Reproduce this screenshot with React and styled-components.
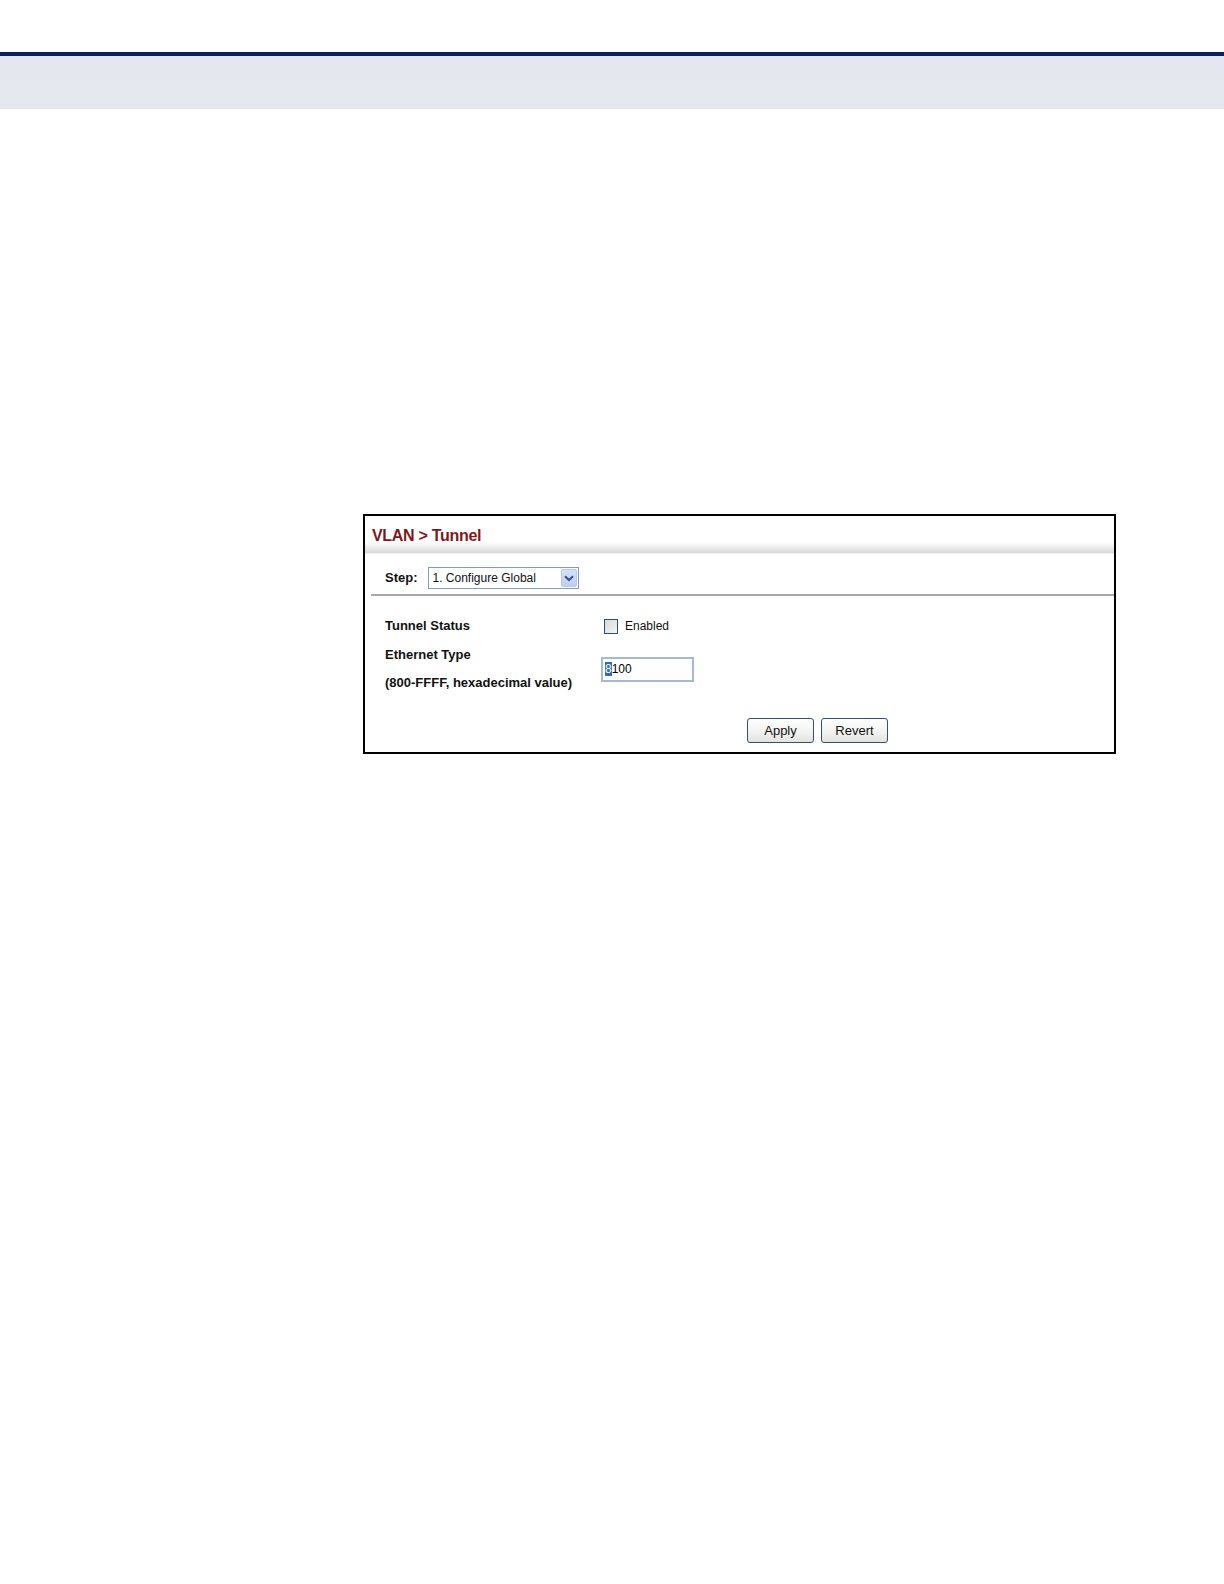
import React from 'react';
import styled, {createGlobalStyle} from "styled-components";

const GlobalStyle = createGlobalStyle`
  body {
    margin: 0;
    background: #ffffff;
    font-family: "Liberation Sans", Arial, sans-serif;
  }
`;

const App = () => {
    return (
        <Page>
            <GlobalStyle/>
            <TopRule/>
            <TopBand/>
            <Main>
                <Panel>
                    <TitleBar>VLAN &gt; Tunnel</TitleBar>
                    <Shade/>
                    <StepRow>
                        <BoldLabel>Step:</BoldLabel>
                        <Select>
                            <span>1. Configure Global</span>
                            <SelectArrow>
                                <svg width="10" height="7" viewBox="0 0 10 7">
                                    <path d="M1 1.2 L5 5 L9 1.2" fill="none" stroke="#35538f" strokeWidth="2"/>
                                </svg>
                            </SelectArrow>
                        </Select>
                    </StepRow>
                    <Divider/>
                    <Form>
                        <FieldRow>
                            <LabelCell>
                                <BoldLabel>Tunnel Status</BoldLabel>
                            </LabelCell>
                            <CheckWrap>
                                <CheckBox/>
                                <CheckText>Enabled</CheckText>
                            </CheckWrap>
                        </FieldRow>
                        <FieldRow $tall>
                            <LabelCell>
                                <BoldLabel $line>Ethernet Type</BoldLabel>
                                <BoldLabel $line>(800-FFFF, hexadecimal value)</BoldLabel>
                            </LabelCell>
                            <TextInput>
                                <Selected>8</Selected>100
                            </TextInput>
                        </FieldRow>
                        <ButtonRow>
                            <Button>Apply</Button>
                            <Button>Revert</Button>
                        </ButtonRow>
                    </Form>
                </Panel>
            </Main>
        </Page>
    )
}

export default App;

const Page = styled.div`
  width: 1224px;
  min-height: 1584px;
  padding-top: 52px;
  box-sizing: border-box;
  background: #fff;
`;
const TopRule = styled.div`
  height: 4px;
  background: #0b2260;
`;
const TopBand = styled.div`
  height: 53px;
  background: linear-gradient(#e4e7ef, #e5e8ee);
`;
const Main = styled.div`
  padding: 405px 0 0 363px;
`;
const Panel = styled.div`
  width: 753px;
  box-sizing: border-box;
  border: 2px solid #000;
  background: #fff;
`;
const TitleBar = styled.div`
  height: 26px;
  box-sizing: border-box;
  padding: 12px 0 0 7px;
  line-height: 16px;
  font-size: 16px;
  font-weight: bold;
  letter-spacing: -0.3px;
  color: #7b1a1c;
`;
const Shade = styled.div`
  height: 11px;
  background: linear-gradient(#ffffff, #e9e9e9 60%, #d9d9d9);
  border-bottom: 1px solid #f2f2f2;
`;
const StepRow = styled.div`
  display: flex;
  align-items: center;
  padding: 13px 0 5px 20px;
  gap: 10px;
`;
const BoldLabel = styled.div`
  font-size: 13px;
  font-weight: bold;
  color: #111;
  line-height: ${p => p.$line ? '28px' : '16px'};
`;
const Select = styled.div`
  width: 151px;
  height: 22px;
  box-sizing: border-box;
  border: 1px solid #7f9db9;
  display: flex;
  align-items: center;
  justify-content: space-between;
  padding: 0 1px 0 4px;
  font-size: 12px;
  color: #111;
`;
const SelectArrow = styled.div`
  width: 16px;
  height: 18px;
  box-sizing: border-box;
  border: 1px solid #b6c8ec;
  border-radius: 2px;
  background: linear-gradient(#d6e1f7, #bccff3);
  display: flex;
  align-items: center;
  justify-content: center;
`;
const Divider = styled.div`
  margin-left: 6px;
  border-top: 2px solid #a9a9a9;
`;
const Form = styled.div`
  padding: 22px 0 9px 20px;
`;
const FieldRow = styled.div`
  display: flex;
  align-items: center;
  margin-bottom: ${p => p.$tall ? '21px' : '7px'};
`;
const LabelCell = styled.div`
  width: 216px;
`;
const CheckWrap = styled.div`
  display: flex;
  align-items: center;
  gap: 7px;
  padding-left: 3px;
`;
const CheckBox = styled.div`
  width: 14px;
  height: 15px;
  box-sizing: border-box;
  border: 1px solid #2a4e78;
  background: linear-gradient(135deg, #d9d9d5, #f4f4f2);
`;
const CheckText = styled.span`
  font-size: 12px;
  color: #111;
`;
const TextInput = styled.div`
  width: 93px;
  height: 25px;
  box-sizing: border-box;
  border: 2px solid #a5b9d4;
  padding: 0 0 0 2px;
  display: flex;
  align-items: center;
  font-size: 12px;
  color: #000;
`;
const Selected = styled.span`
  background: #3168c4;
  color: #fff;
`;
const ButtonRow = styled.div`
  display: flex;
  gap: 7px;
  padding-left: 362px;
`;
const Button = styled.div`
  width: 67px;
  height: 25px;
  box-sizing: border-box;
  border: 1px solid #34506e;
  border-radius: 3px;
  background: linear-gradient(#ffffff, #f1f1ef 60%, #e2e2df);
  display: flex;
  align-items: center;
  justify-content: center;
  font-size: 13px;
  color: #111;
`;
